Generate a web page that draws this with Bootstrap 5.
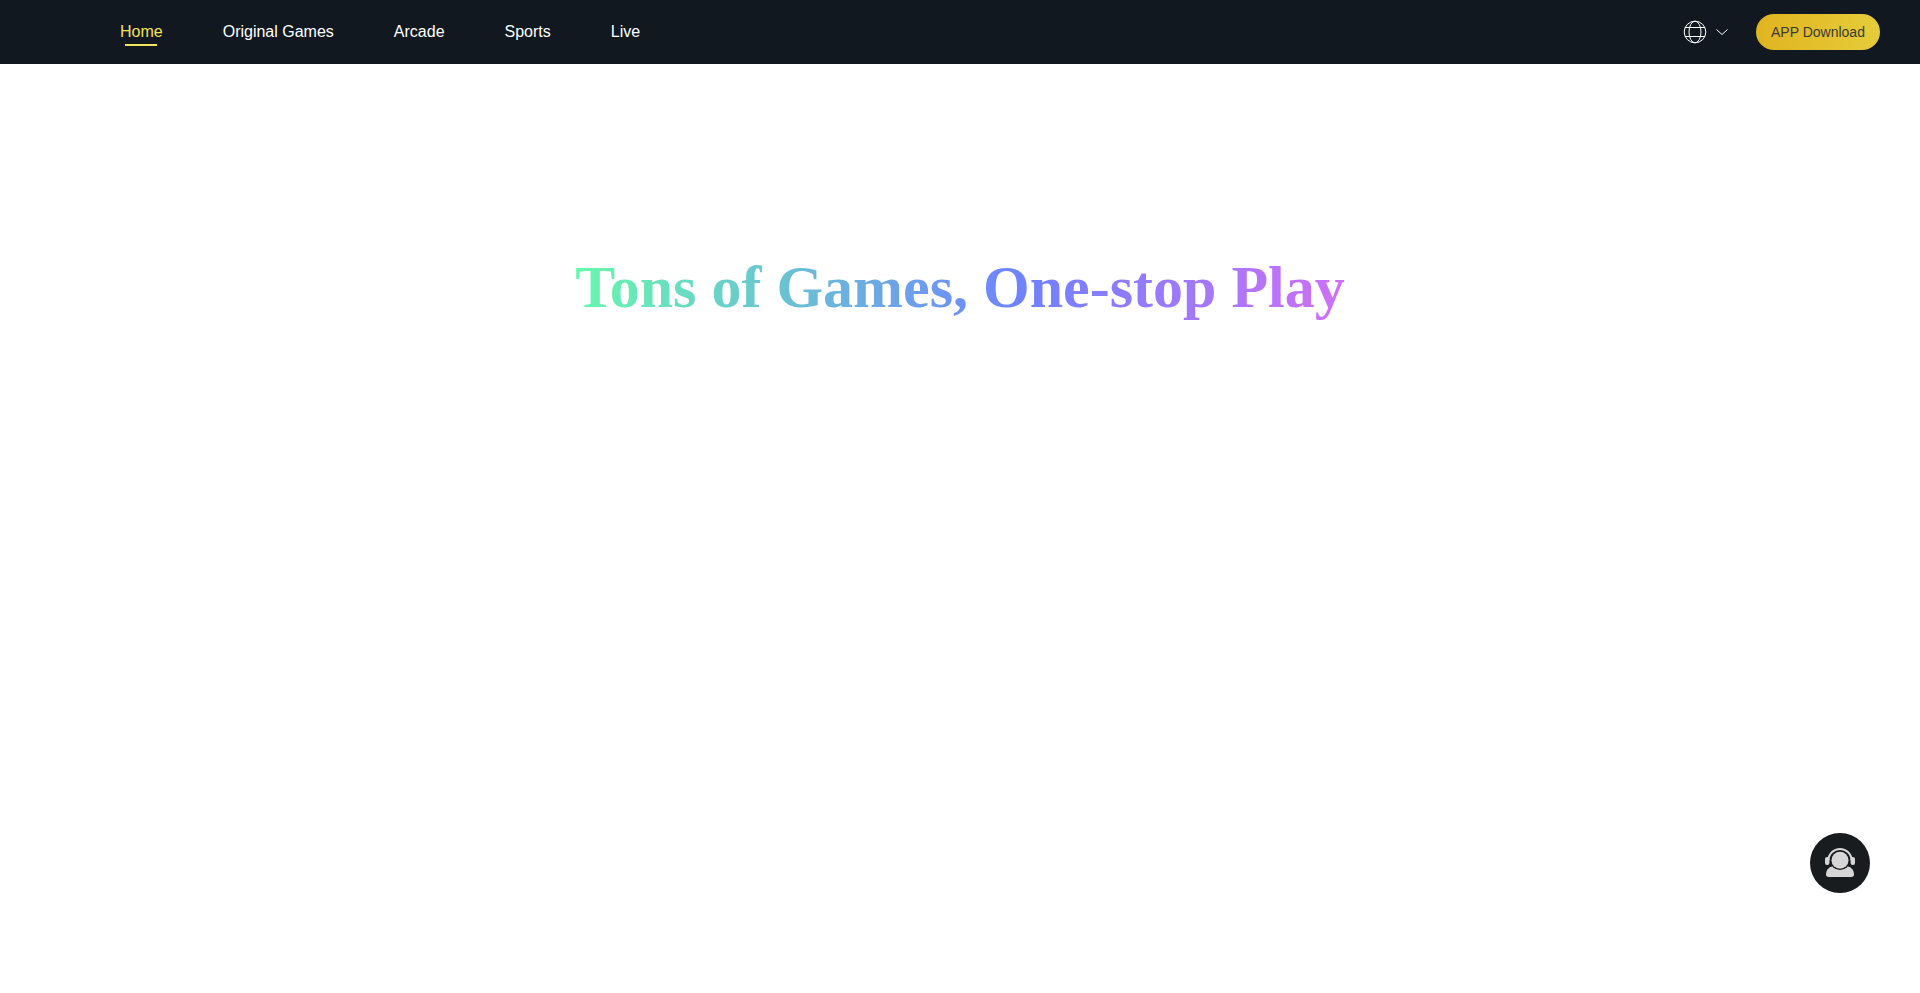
<!DOCTYPE html>
<html lang="en-US">
<head>
    <meta charset="UTF-8">
    <meta name="viewport" content="width=device-width, initial-scale=1.0">
    <title>Home</title>
    <link href="https://cdn.jsdelivr.net/npm/bootstrap@5.3.3/dist/css/bootstrap.min.css" rel="stylesheet">
    <style>
        body {
            background-color: #ffffff;
            font-family: "Liberation Sans", Arial, sans-serif;
        }
        .top-bar {
            height: 64px;
            background-color: #111820;
            padding: 0 40px 0 120px;
        }
        .top-links {
            gap: 60px;
        }
        .top-link {
            position: relative;
            color: #ffffff;
            font-size: 16px;
            line-height: 24px;
            text-decoration: none;
        }
        .top-link.is-active {
            color: #f5e15a;
        }
        .top-link.is-active::after {
            content: "";
            position: absolute;
            left: 5px;
            right: 6px;
            bottom: -2px;
            height: 2px;
            background-color: #f5e15a;
        }
        .lang-pick {
            margin-right: 27px;
            gap: 8px;
        }
        .app-btn {
            width: 124px;
            height: 36px;
            padding: 0;
            border: 0;
            border-radius: 18px;
            font-size: 14px;
            color: #3a3a32;
            background: linear-gradient(90deg, #e0b420, #e6cc3a);
        }
        .hero-title {
            margin: 0;
            padding-top: 187px;
            text-align: center;
            font-family: "Liberation Serif", "Times New Roman", serif;
            font-weight: 700;
            font-size: 60px;
            line-height: 72px;
        }
        .hero-title span {
            color: transparent;
            background: linear-gradient(90deg, #66f9ac 0%, #6f82ff 58%, #cf6ff8 100%);
            -webkit-background-clip: text;
            background-clip: text;
        }
        .help-btn {
            position: fixed;
            left: 1810px;
            top: 833px;
            width: 60px;
            height: 60px;
            border: 0;
            padding: 0;
            border-radius: 50%;
            background-color: #181c1f;
        }
    </style>
</head>
<body>
    <!-- Top bar -->
    <nav class="top-bar d-flex align-items-center justify-content-between">
        <div class="top-links d-flex align-items-center">
            <a class="top-link is-active" href="#">Home</a>
            <a class="top-link" href="#">Original Games</a>
            <a class="top-link" href="#">Arcade</a>
            <a class="top-link" href="#">Sports</a>
            <a class="top-link" href="#">Live</a>
        </div>
        <div class="d-flex align-items-center">
            <div class="lang-pick d-flex align-items-center">
                <svg width="24" height="24" viewBox="0 0 24 24" fill="none" stroke="#ffffff" stroke-width="1">
                    <circle cx="12" cy="12" r="10.8"/>
                    <ellipse cx="12" cy="12" rx="6" ry="10.8"/>
                    <path d="M2 7.500h20M2 16.500h20"/>
                </svg>
                <svg width="14" height="14" viewBox="0 0 14 14" fill="none" stroke="#ffffff" stroke-width="1">
                    <path d="M1.500 4.500 7 9.500l5.500-5"/>
                </svg>
            </div>
            <button type="button" class="btn app-btn">APP Download</button>
        </div>
    </nav>

    <!-- Hero -->
    <h1 class="hero-title"><span>Tons of Games, One-stop Play</span></h1>

    <!-- Customer service -->
    <button type="button" class="help-btn d-flex align-items-center justify-content-center">
        <svg width="32" height="32" viewBox="0 0 32 32">
            <path d="M2 27.500c0-5 3.800-8.500 8.500-8.500h11c4.700 0 8.500 3.500 8.500 8.500 0 1.500-1 2.500-2.500 2.500h-23C3 30 2 29 2 27.500z" fill="#d6d6d6"/>
            <circle cx="16" cy="13.200" r="9.800" fill="#181c1f"/>
            <circle cx="16" cy="13.200" r="8.500" fill="#d6d6d6"/>
            <path d="M4.500 13.500C4.500 6.800 9.600 2 16 2s11.500 4.800 11.500 11.500" fill="none" stroke="#d6d6d6" stroke-width="2"/>
            <rect x="1" y="10" width="4.400" height="8" rx="2" fill="#d6d6d6"/>
            <rect x="26.600" y="10" width="4.400" height="8" rx="2" fill="#d6d6d6"/>
        </svg>
    </button>

    <script src="https://cdn.jsdelivr.net/npm/bootstrap@5.3.3/dist/js/bootstrap.bundle.min.js"></script>
</body>
</html>
